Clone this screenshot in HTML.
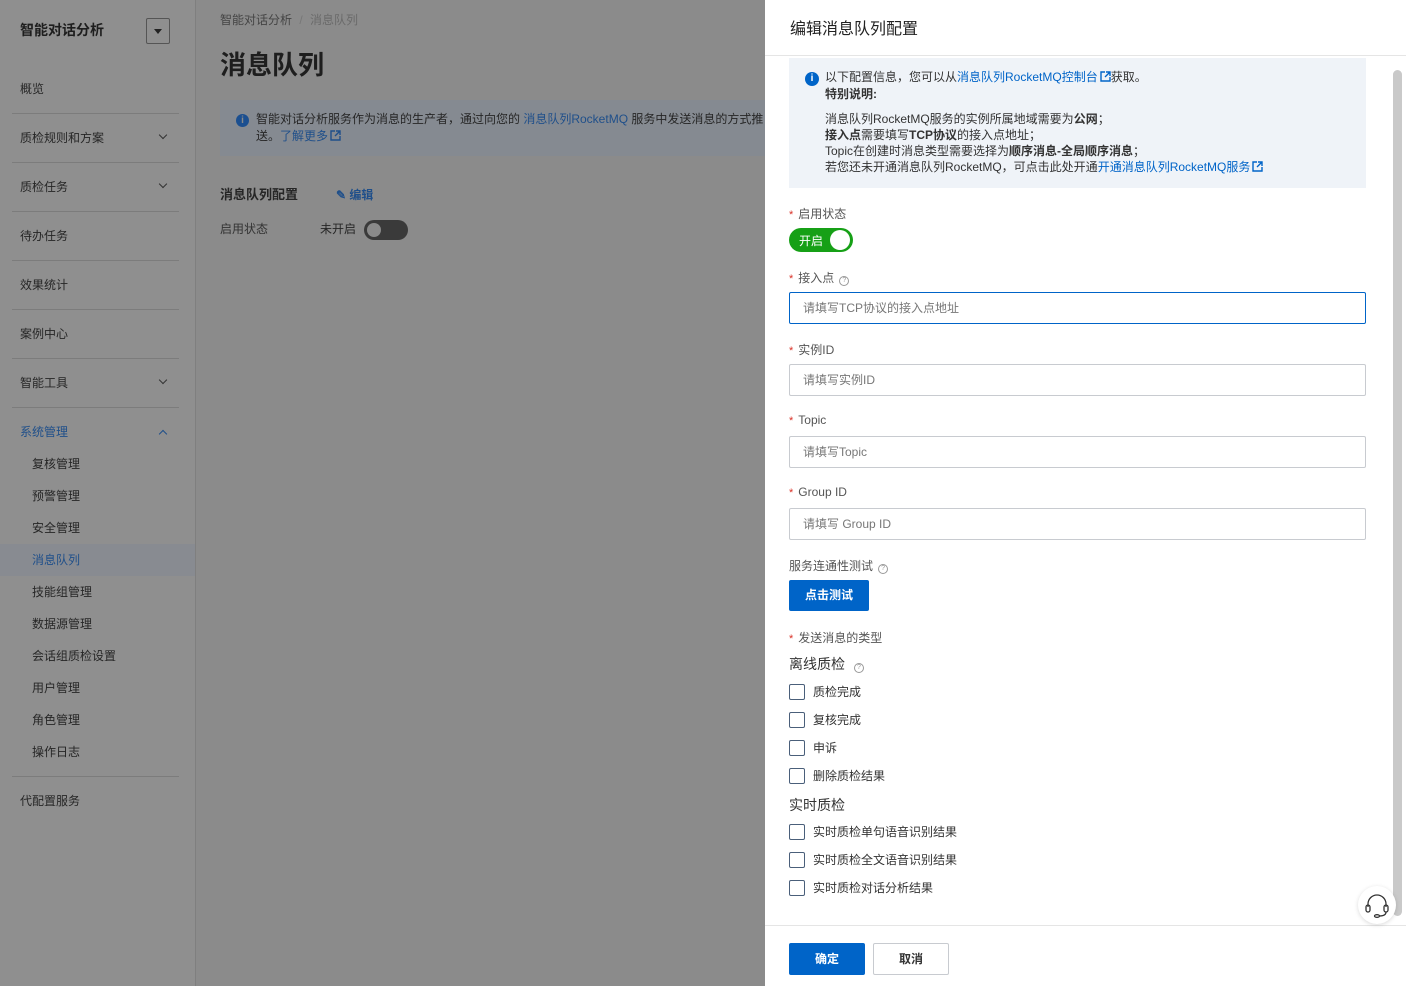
<!DOCTYPE html>
<html><head><meta charset="utf-8"><style>
*{box-sizing:border-box;margin:0;padding:0}
body{width:1406px;height:986px;overflow:hidden;font-family:"Liberation Sans","Noto Sans CJK SC",sans-serif;font-size:12px;color:#333;position:relative;background:#8b8b8b}
.abs{position:absolute}
.side{left:0;top:0;width:196px;height:986px;background:#8f8f8f;border-right:1px solid #7f7f7f}
.side .t{left:20px;top:20px;font-size:14px;font-weight:bold;color:#1e1e1e}
.sel{left:146px;top:18px;width:24px;height:26px;border:1px solid #555;border-radius:2px}
.sel:after{content:"";position:absolute;left:7px;top:10px;border:4px solid transparent;border-top:5px solid #222}
.mi{left:20px;font-size:12px;color:#262626}
.sub{left:32px;font-size:12px;color:#262626}
.hr{left:12px;width:167px;height:1px;background:#7c7c7c}
.chev{left:160px;width:6px;height:6px;border-right:1px solid #333;border-bottom:1px solid #333;transform:rotate(45deg)}
.main{color:#262626}
.drawer{left:765px;top:0;width:641px;height:986px;background:#fff}
.blue{color:#0064c8}
.red:before{content:"*";color:#d93026;margin-right:5px;font-size:11px}
.lab{left:789px;font-size:12px;color:#555}
.inp{left:789px;width:577px;height:32px;border:1px solid #c8cbd0;border-radius:2px;padding-left:13px;line-height:30px;color:#777;font-size:12px}
.cb{left:789px;width:16px;height:16px;border:1px solid #4a5f7a;border-radius:2px}
.cbl{left:813px;font-size:12px;color:#333}
.q{display:inline-block;width:10px;height:10px;border:1px solid #999;border-radius:50%;font-size:7px;line-height:8px;text-align:center;color:#999;margin-left:5px;vertical-align:0}
.ext{display:inline-block;width:11px;height:11px;margin-left:2px;vertical-align:-1px}
</style></head><body>
<div class="abs side">
<div class="abs t">智能对话分析</div>
<div class="abs sel"></div>
<div class="abs mi" style="top:80px">概览</div>
<div class="abs hr" style="top:113px"></div>
<div class="abs mi" style="top:129px">质检规则和方案</div><div class="abs chev" style="top:132px"></div>
<div class="abs hr" style="top:162px"></div>
<div class="abs mi" style="top:178px">质检任务</div><div class="abs chev" style="top:181px"></div>
<div class="abs hr" style="top:211px"></div>
<div class="abs mi" style="top:227px">待办任务</div>
<div class="abs hr" style="top:260px"></div>
<div class="abs mi" style="top:276px">效果统计</div>
<div class="abs hr" style="top:309px"></div>
<div class="abs mi" style="top:325px">案例中心</div>
<div class="abs hr" style="top:358px"></div>
<div class="abs mi" style="top:374px">智能工具</div><div class="abs chev" style="top:377px"></div>
<div class="abs hr" style="top:407px"></div>
<div class="abs mi" style="top:423px;color:#1f4f8a">系统管理</div><div class="abs chev" style="top:431px;transform:rotate(-135deg);border-color:#1f4f8a"></div>
<div class="abs sub" style="top:455px">复核管理</div>
<div class="abs sub" style="top:487px">预警管理</div>
<div class="abs sub" style="top:519px">安全管理</div>
<div class="abs" style="left:0;top:544px;width:195px;height:32px;background:#888b91"></div>
<div class="abs sub" style="top:551px;color:#1f4f8a">消息队列</div>
<div class="abs sub" style="top:583px">技能组管理</div>
<div class="abs sub" style="top:615px">数据源管理</div>
<div class="abs sub" style="top:647px">会话组质检设置</div>
<div class="abs sub" style="top:679px">用户管理</div>
<div class="abs sub" style="top:711px">角色管理</div>
<div class="abs sub" style="top:743px">操作日志</div>
<div class="abs hr" style="top:776px"></div>
<div class="abs mi" style="top:792px">代配置服务</div>
</div>
<div class="abs main" style="left:220px;top:11px;color:#444">智能对话分析 <span style="color:#777;margin:0 4px">/</span> <span style="color:#6a6a6a">消息队列</span></div>
<div class="abs main" style="left:220px;top:45px;font-size:26px;font-weight:bold;color:#1e1e1e">消息队列</div>
<div class="abs" style="left:220px;top:100px;width:545px;height:56px;background:#858a91"></div>
<div class="abs" style="left:236px;top:114px;width:13px;height:13px;border-radius:50%;background:#1b4f90;color:#8a8a8a;font-size:10px;font-weight:bold;text-align:center;line-height:13px">i</div>
<div class="abs main" style="left:256px;top:111px;line-height:17px;white-space:nowrap">智能对话分析服务作为消息的生产者，通过向您的 <span style="color:#1f4f8a">消息队列RocketMQ</span> 服务中发送消息的方式推<br>送。<span style="color:#1f4f8a">了解更多</span><svg class="ext" viewBox="0 0 11 11" fill="none" stroke="#1f4f8a" stroke-width="1.4"><path d="M5 1H1v9h9V6M6 1h4v4M10 1L5 6"/></svg></div>
<div class="abs main" style="left:220px;top:184px;font-size:13px;font-weight:bold">消息队列配置</div>
<div class="abs" style="left:336px;top:186px;color:#1f4f8a;font-weight:bold">✎ 编辑</div>
<div class="abs main" style="left:220px;top:220px;color:#333">启用状态</div>
<div class="abs main" style="left:320px;top:220px">未开启</div>
<div class="abs" style="left:364px;top:220px;width:44px;height:20px;border-radius:10px;background:#3a3a3a"><div style="position:absolute;left:3px;top:3px;width:14px;height:14px;border-radius:50%;background:#8a8a8a"></div></div>

<div class="abs drawer">
<div class="abs" style="left:25px;top:15px;font-size:16px;color:#222">编辑消息队列配置</div>
<div class="abs" style="left:0;top:55px;width:641px;height:1px;background:#e5e5e5"></div>
<div class="abs" style="left:0;top:925px;width:641px;height:1px;background:#e5e5e5"></div>
<div class="abs" style="left:628px;top:70px;width:9px;height:846px;border-radius:5px;background:#c9c9c9"></div>
</div>
<div class="abs" style="left:789px;top:58px;width:577px;height:130px;background:#eff3f8"></div>
<div class="abs" style="left:805px;top:72px;width:14px;height:14px;border-radius:50%;background:#0064c8;color:#fff;font-size:10px;font-weight:bold;text-align:center;line-height:14px">i</div>
<div class="abs" style="left:825px;top:69px;line-height:17px;color:#333;white-space:nowrap">以下配置信息，您可以从<span class="blue">消息队列RocketMQ控制台</span><svg class="ext" viewBox="0 0 11 11" fill="none" stroke="#0064c8" stroke-width="1.4"><path d="M5 1H1v9h9V6M6 1h4v4M10 1L5 6"/></svg>获取。<br><b>特别说明:</b></div>
<div class="abs" style="left:825px;top:111px;line-height:16px;color:#333;white-space:nowrap">消息队列RocketMQ服务的实例所属地域需要为<b>公网</b>；<br><b>接入点</b>需要填写<b>TCP协议</b>的接入点地址；<br>Topic在创建时消息类型需要选择为<b>顺序消息-全局顺序消息</b>；<br>若您还未开通消息队列RocketMQ，可点击此处开通<span class="blue">开通消息队列RocketMQ服务</span><svg class="ext" viewBox="0 0 11 11" fill="none" stroke="#0064c8" stroke-width="1.4"><path d="M5 1H1v9h9V6M6 1h4v4M10 1L5 6"/></svg></div>
<div class="abs lab red" style="top:205px">启用状态</div>
<div class="abs" style="left:789px;top:228px;width:64px;height:24px;border-radius:12px;background:#16a016"><span style="position:absolute;left:10px;top:4px;color:#fff;font-size:12px">开启</span><div style="position:absolute;right:3px;top:2px;width:20px;height:20px;border-radius:50%;background:#fff"></div></div>
<div class="abs lab red" style="top:269px">接入点<span class="q">?</span></div>
<div class="abs inp" style="top:292px;border-color:#0064c8">请填写TCP协议的接入点地址</div>
<div class="abs lab red" style="top:341px">实例ID</div>
<div class="abs inp" style="top:364px">请填写实例ID</div>
<div class="abs lab red" style="top:413px">Topic</div>
<div class="abs inp" style="top:436px">请填写Topic</div>
<div class="abs lab red" style="top:485px">Group ID</div>
<div class="abs inp" style="top:508px">请填写 Group ID</div>
<div class="abs lab" style="top:557px">服务连通性测试<span class="q">?</span></div>
<div class="abs" style="left:789px;top:580px;width:80px;height:31px;background:#0064c8;border-radius:2px;color:#fff;font-weight:bold;text-align:center;line-height:31px">点击测试</div>
<div class="abs lab red" style="top:629px">发送消息的类型</div>
<div class="abs" style="left:789px;top:654px;font-size:14px;color:#333">离线质检<span class="q" style="margin-left:9px">?</span></div>
<div class="abs cb" style="top:684px"></div><div class="abs cbl" style="top:683px">质检完成</div>
<div class="abs cb" style="top:712px"></div><div class="abs cbl" style="top:711px">复核完成</div>
<div class="abs cb" style="top:740px"></div><div class="abs cbl" style="top:739px">申诉</div>
<div class="abs cb" style="top:768px"></div><div class="abs cbl" style="top:767px">删除质检结果</div>
<div class="abs" style="left:789px;top:795px;font-size:14px;color:#333">实时质检</div>
<div class="abs cb" style="top:824px"></div><div class="abs cbl" style="top:823px">实时质检单句语音识别结果</div>
<div class="abs cb" style="top:852px"></div><div class="abs cbl" style="top:851px">实时质检全文语音识别结果</div>
<div class="abs cb" style="top:880px"></div><div class="abs cbl" style="top:879px">实时质检对话分析结果</div>
<div class="abs" style="left:1358px;top:886px;width:38px;height:38px;border-radius:50%;background:#fff;box-shadow:0 1px 4px rgba(0,0,0,.15)">
<svg width="38" height="38" viewBox="0 0 38 38" fill="none" stroke="#333" stroke-width="1.3"><path d="M10 21v-3a9 9 0 0 1 18 0v3"/><rect x="8" y="19" width="4" height="7" rx="2"/><rect x="26" y="19" width="4" height="7" rx="2"/><path d="M28 26c0 3-3 4-7 4"/><ellipse cx="19" cy="30" rx="2.5" ry="1.3"/></svg></div>
<div class="abs" style="left:789px;top:943px;width:76px;height:32px;background:#0064c8;border-radius:2px;color:#fff;font-weight:bold;text-align:center;line-height:32px">确定</div>
<div class="abs" style="left:873px;top:943px;width:76px;height:32px;border:1px solid #c8cbd0;border-radius:2px;color:#333;font-weight:bold;text-align:center;line-height:30px">取消</div>
</body></html>
